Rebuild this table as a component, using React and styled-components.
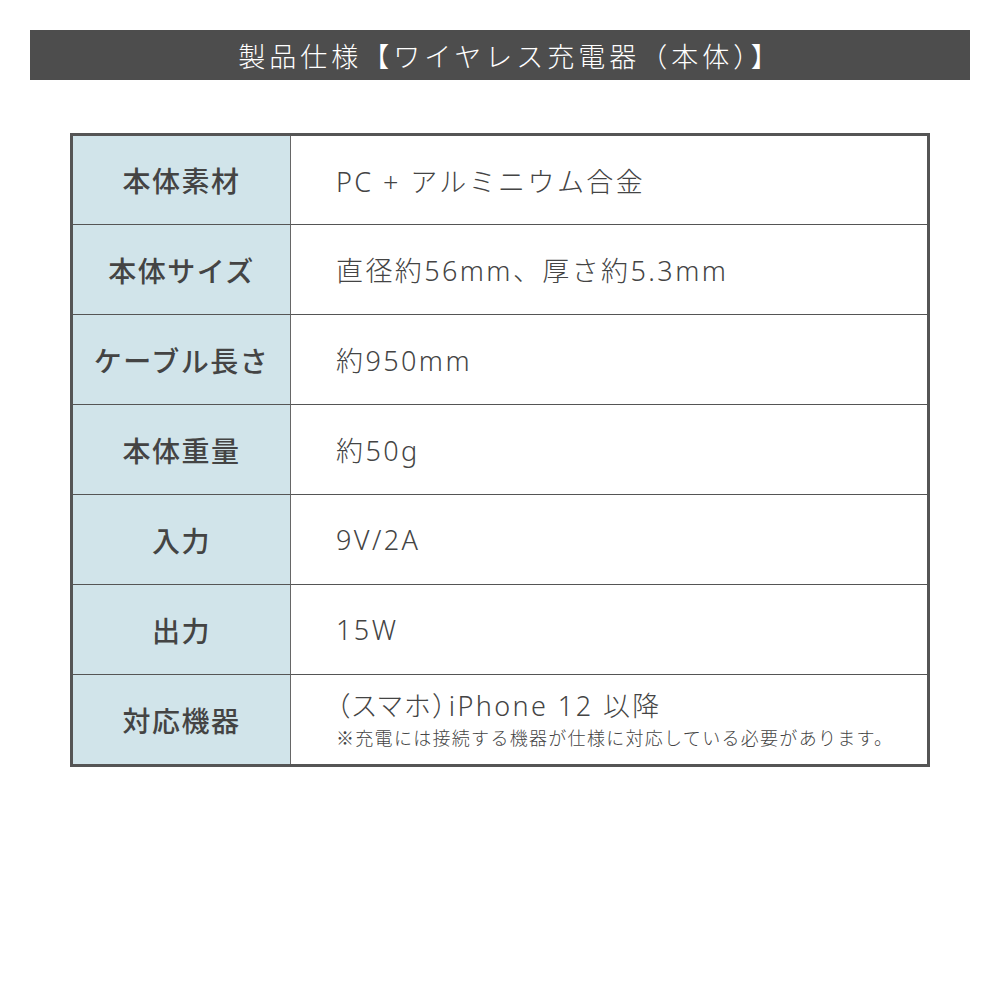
import React from 'react';
import styled, { createGlobalStyle } from 'styled-components';

const GlobalStyle = createGlobalStyle`
  html, body {
    margin: 0;
    padding: 0;
    background: #fff;
  }
  body {
    font-family: "Noto Sans CJK JP", "Noto Sans", sans-serif;
    color: #444;
  }
`;

const Page = styled.div`
  width: 1000px;
  height: 1000px;
  padding-top: 30px;
  box-sizing: border-box;
  display: flex;
  flex-direction: column;
  align-items: center;
`;

const TitleBar = styled.h1`
  margin: 0;
  width: 940px;
  height: 50px;
  box-sizing: border-box;
  padding-left: 20px;
  background: #4d4d4d;
  color: #fff;
  font-size: 27px;
  font-weight: 300;
  letter-spacing: 4px;
  display: flex;
  align-items: center;
  justify-content: center;
`;

const Table = styled.div`
  margin-top: 53px;
  width: 860px;
  box-sizing: border-box;
  border: 3px solid #555;
  display: grid;
  grid-template-columns: 218px 1fr;
`;

const Label = styled.div`
  height: ${p => (p.first ? '88px' : '89px')};
  background: #d1e4ea;
  border-top: ${p => (p.first ? 'none' : '1px solid #555')};
  border-right: 1px solid #666;
  display: flex;
  align-items: center;
  justify-content: center;
  font-size: 28px;
  font-weight: 500;
  letter-spacing: 1.5px;
  color: #444;
`;

const Value = styled.div`
  height: ${p => (p.first ? '88px' : '89px')};
  border-top: ${p => (p.first ? 'none' : '1px solid #555')};
  padding-left: 45px;
  display: flex;
  flex-direction: column;
  justify-content: center;
  font-family: "Noto Sans", "Noto Sans CJK JP", sans-serif;
  font-size: 27px;
  font-weight: 300;
  letter-spacing: 2.4px;
  color: #444;
`;

const MainLine = styled.span`
  line-height: 1.15;
  font-feature-settings: "palt";
`;

const Note = styled.span`
  font-family: "Noto Sans CJK JP", sans-serif;
  font-size: 18px;
  letter-spacing: 1.3px;
  line-height: 1.2;
  margin-top: 6px;
`;

const rows = [
  ['本体素材', 'PC + アルミニウム合金'],
  ['本体サイズ', '直径約56mm、厚さ約5.3mm'],
  ['ケーブル長さ', '約950mm'],
  ['本体重量', '約50g'],
  ['入力', '9V/2A'],
  ['出力', '15W'],
];

export default function App() {
  return (
    <>
      <GlobalStyle />
      <Page>
        <TitleBar>製品仕様【ワイヤレス充電器（本体）】</TitleBar>
        <Table>
          {rows.map(([label, value], i) => (
            <React.Fragment key={label}>
              <Label first={i === 0}>{label}</Label>
              <Value first={i === 0}>{value}</Value>
            </React.Fragment>
          ))}
          <Label>対応機器</Label>
          <Value>
            <MainLine>（スマホ）iPhone 12 以降</MainLine>
            <Note>※充電には接続する機器が仕様に対応している必要があります。</Note>
          </Value>
        </Table>
      </Page>
    </>
  );
}
